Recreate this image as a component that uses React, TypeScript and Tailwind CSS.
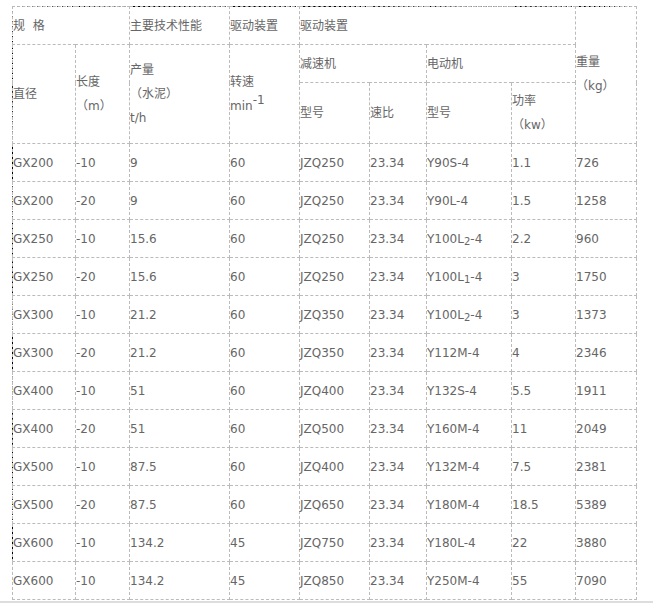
const rows: [string, string, string, string, string, string, React.ReactNode, string, string][] = [
  ['GX200', '-10', '9', '60', 'JZQ250', '23.34', 'Y90S-4', '1.1', '726'],
  ['GX200', '-20', '9', '60', 'JZQ250', '23.34', 'Y90L-4', '1.5', '1258'],
  ['GX250', '-10', '15.6', '60', 'JZQ250', '23.34', <>Y100L<sub className="text-[10px]">2</sub>-4</>, '2.2', '960'],
  ['GX250', '-20', '15.6', '60', 'JZQ250', '23.34', <>Y100L<sub className="text-[10px]">1</sub>-4</>, '3', '1750'],
  ['GX300', '-10', '21.2', '60', 'JZQ350', '23.34', <>Y100L<sub className="text-[10px]">2</sub>-4</>, '3', '1373'],
  ['GX300', '-20', '21.2', '60', 'JZQ350', '23.34', 'Y112M-4', '4', '2346'],
  ['GX400', '-10', '51', '60', 'JZQ400', '23.34', 'Y132S-4', '5.5', '1911'],
  ['GX400', '-20', '51', '60', 'JZQ500', '23.34', 'Y160M-4', '11', '2049'],
  ['GX500', '-10', '87.5', '60', 'JZQ400', '23.34', 'Y132M-4', '7.5', '2381'],
  ['GX500', '-20', '87.5', '60', 'JZQ650', '23.34', 'Y180M-4', '18.5', '5389'],
  ['GX600', '-10', '134.2', '45', 'JZQ750', '23.34', 'Y180L-4', '22', '3880'],
  ['GX600', '-10', '134.2', '45', 'JZQ850', '23.34', 'Y250M-4', '55', '7090'],
];

const widths = [63, 54, 100, 70, 70, 57, 85, 64, 61];
const td = 'border border-dashed border-[#bbb] p-0 align-middle';

export default function App() {
  return (
    <div className="w-[653px] h-[605px] bg-white text-[#666] text-[12px]" style={{ fontFamily: '"DejaVu Sans", "Noto Sans CJK SC", sans-serif' }}>
      <div className="pt-[6px] pl-[12px]">
        <div className="w-[625px] border-t border-l border-dashed border-black">
          <table className="table-fixed border-collapse w-[624px] -mt-px -ml-px">
            <colgroup>
              {widths.map((w, i) => <col key={i} style={{ width: w }} />)}
            </colgroup>
            <tbody>
              <tr className="h-[38px]">
                <td className={td} colSpan={2}>规&nbsp;&nbsp;格</td>
                <td className={td}>主要技术性能</td>
                <td className={td}>驱动装置</td>
                <td className={td} colSpan={4}>驱动装置</td>
                <td className={td} rowSpan={3}>
                  <div className="leading-[24px] -mt-[2px]">重量<br />（kg）</div>
                </td>
              </tr>
              <tr className="h-[38px]">
                <td className={td} rowSpan={2}>直径</td>
                <td className={td} rowSpan={2}><div className="leading-[24px]">长度<br />（m）</div></td>
                <td className={td} rowSpan={2}><div className="leading-[24px]">产量<br />（水泥）<br />t/h</div></td>
                <td className={td} rowSpan={2}><div className="leading-[24px]">转速<br />min<sup className="text-[12px]">-1</sup></div></td>
                <td className={td} colSpan={2}>减速机</td>
                <td className={td} colSpan={2}>电动机</td>
              </tr>
              <tr className="h-[61px]">
                <td className={td}>型号</td>
                <td className={td}>速比</td>
                <td className={td}>型号</td>
                <td className={td}><div className="leading-[24px]">功率<br />（kw）</div></td>
              </tr>
              {rows.map((r, i) => (
                <tr key={i} className="h-[38px]">
                  {r.map((c, j) => <td key={j} className={td}>{c}</td>)}
                </tr>
              ))}
            </tbody>
          </table>
        </div>
      </div>
      <div className="mt-[1px] h-[2px] bg-[#ddd]" />
    </div>
  );
}
